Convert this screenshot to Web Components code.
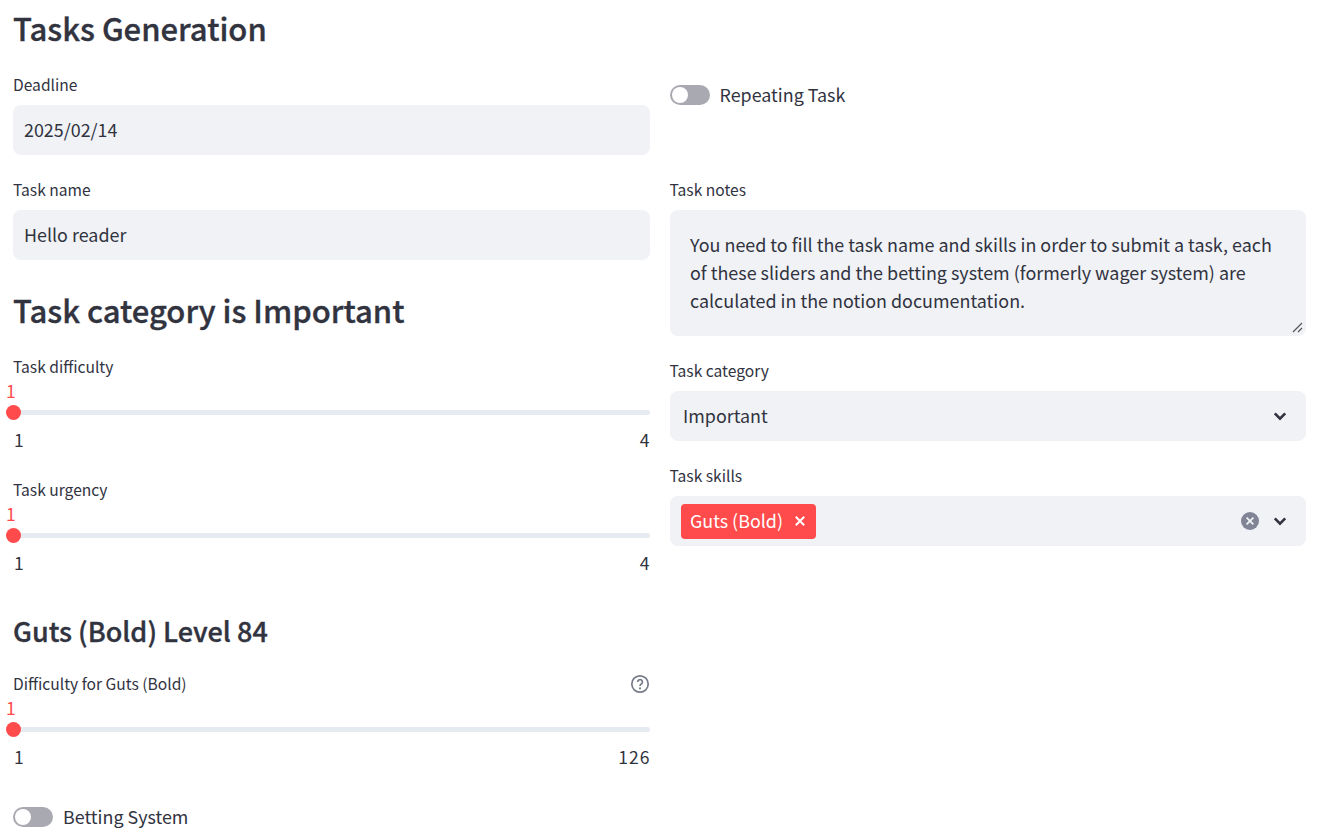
<!DOCTYPE html>
<html>
<head>
<meta charset="utf-8">
<style>
  html, body { margin: 0; background: #fff; }
  body {
    font-family: "Noto Sans CJK SC", "Noto Sans", sans-serif;
    color: #31333f;
    overflow: hidden;
    height: 836px;
  }
</style>
</head>
<body>
<task-form></task-form>

<script>
const chevron = `<svg width="20" height="20" viewBox="0 0 20 20"><path d="M4.8 7.4 10 12.6 15.2 7.4" fill="none" stroke="#31333f" stroke-width="2.6"/></svg>`

class StHeading extends HTMLElement {
  constructor() {
    super()
    const shadow = this.attachShadow({ mode: 'open' })
    const size = this.getAttribute('size') || '31'
    shadow.innerHTML = `
      <style>
        :host { display: block; font-size: ${size}px; font-weight: 500; -webkit-text-stroke: 0.35px #31333f; line-height: 36px; color: #31333f; white-space: nowrap; }
      </style>
      <slot></slot>
    `
  }
}

class StLabel extends HTMLElement {
  constructor() {
    super()
    const shadow = this.attachShadow({ mode: 'open' })
    shadow.innerHTML = `
      <style>
        :host { display: flex; justify-content: space-between; align-items: center; height: 20px; font-size: 15.6px; line-height: 20px; color: #31333f; }
      </style>
      <slot></slot>
      <slot name="help"></slot>
    `
  }
}

class StInput extends HTMLElement {
  constructor() {
    super()
    const shadow = this.attachShadow({ mode: 'open' })
    shadow.innerHTML = `
      <style>
        :host { display: block; }
        .box { margin-top: 11px; height: 50px; box-sizing: border-box; padding: 0 11px 2px; background: #f0f2f6; border-radius: 8px; display: flex; align-items: center; font-size: 17.9px; }
      </style>
      <st-label></st-label>
      <div class="box"><slot></slot></div>
    `
    shadow.querySelector('st-label').textContent = this.getAttribute('label')
  }
}

class StTextarea extends HTMLElement {
  constructor() {
    super()
    const shadow = this.attachShadow({ mode: 'open' })
    shadow.innerHTML = `
      <style>
        :host { display: block; }
        .box { position: relative; margin-top: 11px; height: 126px; box-sizing: border-box; padding: 20px 20px 0 20.5px; background: #f0f2f6; border-radius: 8px; font-size: 17.93px; line-height: 28px; }
        svg { position: absolute; right: 3px; bottom: 3px; }
      </style>
      <st-label></st-label>
      <div class="box">
        <slot></slot>
        <svg width="11" height="11" viewBox="0 0 11 11"><path d="M1 10 10 1M6 10l4-4" stroke="#555" stroke-width="1.2" fill="none"/></svg>
      </div>
    `
    shadow.querySelector('st-label').textContent = this.getAttribute('label')
  }
}

class StSelect extends HTMLElement {
  constructor() {
    super()
    const shadow = this.attachShadow({ mode: 'open' })
    shadow.innerHTML = `
      <style>
        :host { display: block; }
        .box { margin-top: 11px; height: 50px; box-sizing: border-box; padding: 0 16px 0 13.5px; background: #f0f2f6; border-radius: 8px; display: flex; align-items: center; justify-content: space-between; font-size: 17.9px; }
        .box span { margin-bottom: 2px; }
        svg { display: block; }
      </style>
      <st-label></st-label>
      <div class="box"><span><slot></slot></span>${chevron}</div>
    `
    shadow.querySelector('st-label').textContent = this.getAttribute('label')
  }
}

class StMultiselect extends HTMLElement {
  constructor() {
    super()
    const shadow = this.attachShadow({ mode: 'open' })
    shadow.innerHTML = `
      <style>
        :host { display: block; }
        .box { margin-top: 11px; height: 50px; box-sizing: border-box; padding: 0 16px 0 11px; background: #f0f2f6; border-radius: 8px; display: flex; align-items: center; gap: 10px; }
        .tag { height: 35px; box-sizing: border-box; padding: 0 9.5px; background: #ff4b4b; color: #fff; border-radius: 4px; display: flex; align-items: center; gap: 11.5px; font-size: 17.9px; }
        .tag span { margin-bottom: 2px; }
        .spacer { flex: 1; }
        svg { display: block; }
      </style>
      <st-label></st-label>
      <div class="box">
        <div class="tag"><span><slot></slot></span>
          <svg width="12" height="12" viewBox="0 0 12 12"><path d="M1.8 1.8 10.2 10.2M10.2 1.8 1.8 10.2" stroke="#fff" stroke-width="2"/></svg>
        </div>
        <div class="spacer"></div>
        <svg width="20" height="20" viewBox="0 0 20 20"><circle cx="10" cy="10" r="9" fill="#808495"/><path d="M6.6 6.6 13.4 13.4M13.4 6.6 6.6 13.4" stroke="#f0f2f6" stroke-width="1.8"/></svg>
        ${chevron}
      </div>
    `
    shadow.querySelector('st-label').textContent = this.getAttribute('label')
  }
}

class StSlider extends HTMLElement {
  constructor() {
    super()
    const shadow = this.attachShadow({ mode: 'open' })
    shadow.innerHTML = `
      <style>
        :host { display: block; }
        .rail { position: relative; margin-top: 34px; height: 5px; background: #e6eaf1; border-radius: 3px; }
        .thumb { position: absolute; left: -7.5px; top: -5px; width: 15px; height: 15px; border-radius: 50%; background: #ff4b4b; }
        .value { position: absolute; left: -7px; top: -30px; font-size: 17.5px; line-height: 22px; color: #ff4b4b; }
        .ends { display: flex; justify-content: space-between; margin-top: 14px; padding-left: 1px; font-size: 17.5px; letter-spacing: 1px; line-height: 22px; }
        .ends span:last-child { margin-right: -1px; }
      </style>
      <st-label><slot></slot><slot name="help" slot="help"></slot></st-label>
      <div class="rail">
        <div class="thumb"></div>
        <div class="value">${this.getAttribute('min')}</div>
      </div>
      <div class="ends"><span>${this.getAttribute('min')}</span><span>${this.getAttribute('max')}</span></div>
    `
  }
}

class StToggle extends HTMLElement {
  constructor() {
    super()
    const shadow = this.attachShadow({ mode: 'open' })
    shadow.innerHTML = `
      <style>
        :host { display: flex; align-items: center; gap: 10px; font-size: 17.9px; line-height: 24px; }
        .track { width: 40px; height: 20px; border-radius: 10px; background: #a9a9b1; display: flex; align-items: center; padding-left: 2px; box-sizing: border-box; }
        .knob { width: 16px; height: 16px; border-radius: 50%; background: #fff; }
        span { margin-bottom: 2px; }
      </style>
      <div class="track"><div class="knob"></div></div>
      <span><slot></slot></span>
    `
  }
}

const formTemplate = document.createElement('template')
formTemplate.innerHTML = `
  <style>
    :host { display: grid; grid-template-columns: 636.5px 636.5px; column-gap: 20px; padding-left: 13px; }
    .col { display: flex; flex-direction: column; }
    .title { margin-top: 10px; }
    .deadline { margin-top: 28px; }
    .name { margin-top: 24px; }
    .category { margin-top: 32px; }
    .difficulty { margin-top: 28px; }
    .urgency { margin-top: 28px; }
    .guts { margin-top: 39px; }
    .guts-slider { margin-top: 24px; }
    .betting { margin-top: 36px; }
    .repeat { margin-top: 82px; }
    .notes { margin-top: 71px; }
    .task-category { margin-top: 24px; }
    .skills { margin-top: 24px; }
    svg { display: block; margin-top: 2px; }
  </style>
  <div class="col">
    <st-heading class="title" size="31">Tasks Generation</st-heading>
    <st-input class="deadline" label="Deadline">2025/02/14</st-input>
    <st-input class="name" label="Task name">Hello reader</st-input>
    <st-heading class="category" size="31">Task category is Important</st-heading>
    <st-slider class="difficulty" min="1" max="4">Task difficulty</st-slider>
    <st-slider class="urgency" min="1" max="4">Task urgency</st-slider>
    <st-heading class="guts" size="27">Guts (Bold) Level 84</st-heading>
    <st-slider class="guts-slider" min="1" max="126">Difficulty for Guts (Bold)
      <svg slot="help" width="20" height="20" viewBox="0 0 20 20">
        <circle cx="10" cy="10" r="8.2" fill="none" stroke="#777b88" stroke-width="1.7"/>
        <path d="M7.6 8a2.4 2.4 0 1 1 3.7 2c-.9.6-1.3 1-1.3 1.9" fill="none" stroke="#777b88" stroke-width="1.7"/>
        <circle cx="10" cy="14.4" r="1.05" fill="#777b88"/>
      </svg>
    </st-slider>
    <st-toggle class="betting">Betting System</st-toggle>
  </div>
  <div class="col">
    <st-toggle class="repeat">Repeating Task</st-toggle>
    <st-textarea class="notes" label="Task notes">You need to fill the task name and skills in order to submit a task, each of these sliders and the betting system (formerly wager system) are calculated in the notion documentation.</st-textarea>
    <st-select class="task-category" label="Task category">Important</st-select>
    <st-multiselect class="skills" label="Task skills">Guts (Bold)</st-multiselect>
  </div>
`

class TaskForm extends HTMLElement {
  constructor() {
    super()
    const shadow = this.attachShadow({ mode: 'open' })
    shadow.append(formTemplate.content.cloneNode(true))
  }
}

customElements.define('st-heading', StHeading)
customElements.define('st-label', StLabel)
customElements.define('st-input', StInput)
customElements.define('st-textarea', StTextarea)
customElements.define('st-select', StSelect)
customElements.define('st-multiselect', StMultiselect)
customElements.define('st-slider', StSlider)
customElements.define('st-toggle', StToggle)
customElements.define('task-form', TaskForm)
</script>
</body>
</html>
